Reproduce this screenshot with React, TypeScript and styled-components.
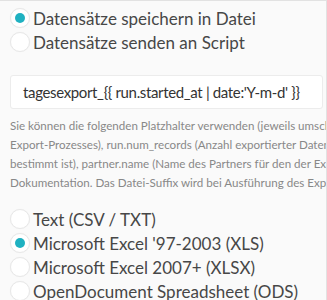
import React, { FC } from "react";
import styled, { createGlobalStyle } from "styled-components";

const GlobalStyle = createGlobalStyle`
  html, body {
    margin: 0;
    padding: 0;
    background: #fafafa;
  }
  body {
    font-family: Lato, "Noto Sans", sans-serif;
  }
`;

interface Option {
  label: string,
  checked: boolean
}

const targets: Option[] = [
  { label: "Datensätze speichern in Datei", checked: true },
  { label: "Datensätze senden an Script", checked: false },
];

const formats: Option[] = [
  { label: "Text (CSV / TXT)", checked: false },
  { label: "Microsoft Excel '97-2003 (XLS)", checked: true },
  { label: "Microsoft Excel 2007+ (XLSX)", checked: false },
  { label: "OpenDocument Spreadsheet (ODS)", checked: false },
];

const helpLines = [
  "Sie können die folgenden Platzhalter verwenden (jeweils umschlossen von {{ }}): run.started_at (Startzeitpunkt des",
  "Export-Prozesses), run.num_records (Anzahl exportierter Datensätze), export.name (Name des Exports, für den der Lauf",
  "bestimmt ist), partner.name (Name des Partners für den der Export bestimmt ist). Weitere Filter finden Sie in der",
  "Dokumentation. Das Datei-Suffix wird bei Ausführung des Exports automatisch angehängt.",
];

const RadioGroup: FC<{ options: Option[] }> = ({ options }) => (
  <RadioList>
    {options.map(o => (
      <RadioRow key={o.label}>
        <RadioCircle checked={o.checked} />
        <RadioLabel>{o.label}</RadioLabel>
      </RadioRow>
    ))}
  </RadioList>
);

const App: FC = () => {
  return (
    <>
      <GlobalStyle />
      <Panel>
        <RadioGroup options={targets} />
        <FileInput>tagesexport_{"{{"} run.started_at | date:'Y-m-d' {"}}"}</FileInput>
        <HelpText>
          {helpLines.map(l => <div key={l}>{l}</div>)}
        </HelpText>
        <RadioGroup options={formats} />
      </Panel>
    </>
  );
};

const Panel = styled.div`
  box-sizing: border-box;
  width: 327px;
  height: 300px;
  overflow: hidden;
  background: #fafafa;
  border-top: 1px solid #e2e2e2;
  border-right: 1px solid #e2e2e2;
  padding: 7px 0 0 10px;
`;

const RadioList = styled.div`
  display: flex;
  flex-direction: column;
  gap: 4px;
`;

const RadioRow = styled.div`
  display: flex;
  align-items: center;
  gap: 3px;
  height: 20px;
  white-space: nowrap;
`;

const RadioCircle = styled.span<{ checked: boolean }>`
  box-sizing: border-box;
  flex: 0 0 20px;
  width: 20px;
  height: 20px;
  border-radius: 50%;
  background: #fff;
  border: 1px solid #e8e8e8;
  box-shadow: 0 0 1px rgba(0, 0, 0, 0.06);
  display: flex;
  align-items: center;
  justify-content: center;
  &::after {
    content: "";
    display: ${p => (p.checked ? "block" : "none")};
    width: 10px;
    height: 10px;
    border-radius: 50%;
    background: #1fb1c1;
  }
`;

const RadioLabel = styled.span`
  font-size: 17px;
  color: #474747;
`;

const FileInput = styled.div`
  box-sizing: border-box;
  margin-top: 23px;
  width: 313px;
  height: 34px;
  background: #fff;
  border: 1px solid #ececec;
  border-radius: 3px;
  padding: 0 12px;
  display: flex;
  align-items: center;
  font-size: 15px;
  letter-spacing: -0.35px;
  color: #333;
  white-space: nowrap;
  overflow: hidden;
`;

const HelpText = styled.div`
  margin-top: 7px;
  margin-bottom: 17px;
  font-size: 11.6px;
  line-height: 19px;
  color: #888;
  white-space: nowrap;
`;

export default App;
